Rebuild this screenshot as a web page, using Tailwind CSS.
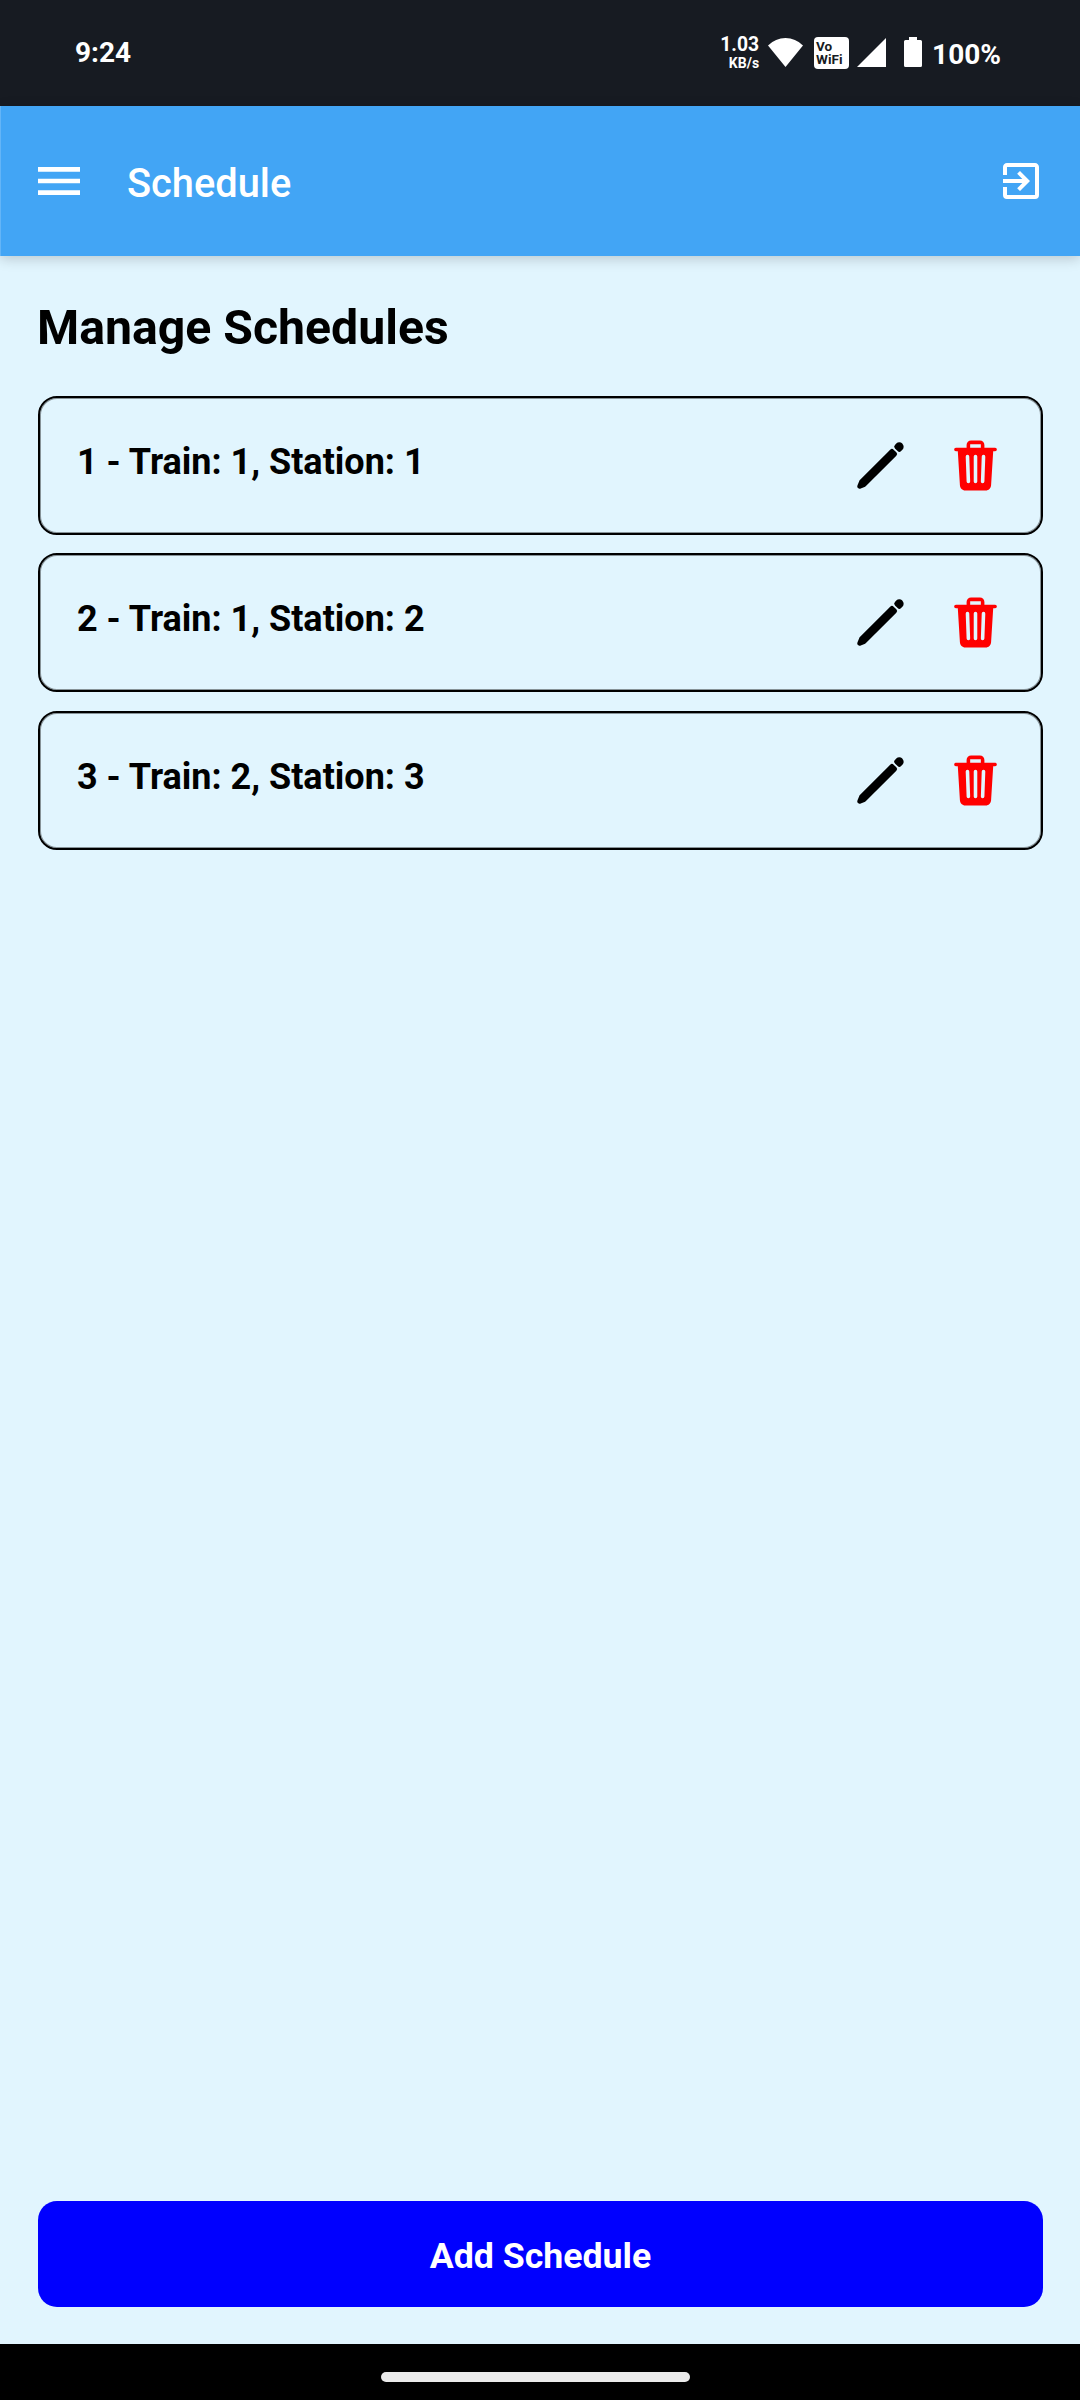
<!DOCTYPE html>
<html lang="en">
<head>
<meta charset="utf-8">
<title>Schedule</title>
<script src="https://cdn.jsdelivr.net/npm/@tailwindcss/browser@4"></script>
</head>
<body class="w-[1080px] h-[2400px] flex flex-col overflow-hidden bg-[#e1f5fe] font-['Roboto',sans-serif] text-black">
  <svg class="hidden">
    <symbol id="pencil" viewBox="0 0 512 512">
      <g fill="currentColor" stroke="currentColor" stroke-width="44" stroke-linecap="round" stroke-linejoin="round">
        <path d="M358.62 129.28L86.49 402.08 70 442l39.92-16.49 272.8-272.13-24.1-24.1z"/>
        <path d="M413.07 74.84l-11.79 11.78 24.1 24.1 11.79-11.79a16.51 16.51 0 000-23.35l-.75-.74a16.51 16.51 0 00-23.35 0z"/>
      </g>
    </symbol>
    <symbol id="trash" viewBox="0 0 512 512">
      <path fill="currentColor" d="M432 96h-96V72a40 40 0 00-40-40h-80a40 40 0 00-40 40v24H80a16 16 0 000 32h17l19 304.92c1.42 26.85 22 47.08 48 47.08h184c26.13 0 46.3-19.78 48-47l19-305h17a16 16 0 000-32zM192.57 416H192a16 16 0 01-16-15.43l-8-224a16 16 0 1132-1.14l8 224A16 16 0 01192.57 416zM272 400a16 16 0 01-32 0V176a16 16 0 0132 0zm32-304h-96V72a7.91 7.91 0 018-8h80a7.91 7.91 0 018 8zm32 304.57A16 16 0 01320 416h-.58A16 16 0 01304 399.43l8-224a16 16 0 1132 1.14z"/>
    </symbol>
  </svg>

  <!-- Status bar -->
  <div class="h-[106px] shrink-0 flex items-start bg-[#171b22] text-white font-bold pl-[75px] pr-[79px]">
    <span class="mt-[39px] text-[28px] leading-none">9:24</span>
    <div class="ml-auto mt-[35px] flex flex-col items-end">
      <span class="text-[19.3px] leading-[19px]">1.03</span>
      <span class="mt-[2px] text-[14px] leading-[14px]">KB/s</span>
    </div>
    <svg class="mt-[38px] ml-[9px] w-[35px] h-[29px]" viewBox="0 0 35 29"><path fill="#fff" d="M0 7.500Q7.500 0 17.500 0T35 7.500L17.500 29z"/></svg>
    <div class="mt-[37px] ml-[11px] w-[35px] h-[32px] rounded-[4px] bg-white text-[#171b22] pl-[2px] pt-[3px] text-[13.5px] leading-[13px]">
      <div>Vo</div><div>WiFi</div>
    </div>
    <svg class="mt-[38px] ml-[8px] w-[29px] h-[29px]" viewBox="0 0 29 29"><path fill="#fff" d="M29 0v29H0z"/></svg>
    <svg class="mt-[37px] ml-[18px] w-[18px] h-[30px]" viewBox="0 0 18 30"><path fill="#fff" d="M5 0h8v3h3.500q1.500 0 1.500 1.500v24q0 1.500-1.500 1.500h-15Q0 30 0 28.500v-24Q0 3 1.500 3H5z"/></svg>
    <span class="mt-[41px] ml-[10px] text-[28px] leading-none">100%</span>
  </div>

  <!-- App bar -->
  <header class="relative h-[150px] shrink-0 flex items-start bg-[#42a5f5] text-white border-l border-[#64b5f7] shadow-[0_3px_12px_rgba(0,0,0,0.18)] pl-[30px] pr-[35px]">
    <svg class="mt-[47px] w-[56px] h-[56px]" viewBox="0 0 24 24"><path fill="currentColor" d="M3 18h18v-2H3v2zm0-5h18v-2H3v2zm0-7v2h18V6H3z"/></svg>
    <h1 class="ml-[40px] mt-[58px] text-[39.8px] leading-none font-medium">Schedule</h1>
    <svg class="ml-auto mt-[51px] w-[48px] h-[48px]" viewBox="0 0 24 24"><path fill="currentColor" d="M19 3H5C3.890 3 3 3.890 3 5V9H5V5H19V19H5V15H3V19A2 2 0 0 0 5 21H19A2 2 0 0 0 21 19V5C21 3.890 20.100 3 19 3M10.080 15.580L11.500 17L16.500 12L11.500 7L10.080 8.410L12.670 11H3V13H12.670L10.080 15.580Z"/></svg>
  </header>

  <main class="grow flex flex-col pt-[48px] pl-[38px] pr-[37px] pb-[37px]">
    <h2 class="-ml-px text-[48.2px] leading-[48px] font-bold">Manage Schedules</h2>
    <ul class="mt-[44px] flex flex-col gap-[18.4px]">
      <li class="h-[139px] flex items-start border-2 border-black rounded-[19px] shadow-[inset_0_0_0_1px_rgba(0,0,0,0.4)] pl-[37px] pr-[37px]">
        <span class="mt-[46px] text-[36px] leading-none font-bold">1 - Train: 1, Station: 1</span>
        <svg class="ml-auto mt-[39px] w-[57px] h-[57px]"><use href="#pencil"/></svg>
        <svg class="ml-[38px] mt-[39px] w-[57px] h-[57px] text-[#ff0000]"><use href="#trash"/></svg>
      </li>
      <li class="h-[139px] flex items-start border-2 border-black rounded-[19px] shadow-[inset_0_0_0_1px_rgba(0,0,0,0.4)] pl-[37px] pr-[37px]">
        <span class="mt-[46px] text-[36px] leading-none font-bold">2 - Train: 1, Station: 2</span>
        <svg class="ml-auto mt-[39px] w-[57px] h-[57px]"><use href="#pencil"/></svg>
        <svg class="ml-[38px] mt-[39px] w-[57px] h-[57px] text-[#ff0000]"><use href="#trash"/></svg>
      </li>
      <li class="h-[139px] flex items-start border-2 border-black rounded-[19px] shadow-[inset_0_0_0_1px_rgba(0,0,0,0.4)] pl-[37px] pr-[37px]">
        <span class="mt-[46px] text-[36px] leading-none font-bold">3 - Train: 2, Station: 3</span>
        <svg class="ml-auto mt-[39px] w-[57px] h-[57px]"><use href="#pencil"/></svg>
        <svg class="ml-[38px] mt-[39px] w-[57px] h-[57px] text-[#ff0000]"><use href="#trash"/></svg>
      </li>
    </ul>
    <button class="mt-auto h-[106px] pt-[5px] rounded-[19px] bg-[#0000ff] text-white text-[35.7px] leading-none font-bold">Add Schedule</button>
  </main>

  <!-- Gesture bar -->
  <div class="h-[56px] shrink-0 bg-black flex pl-[381px] pt-[28px]">
    <div class="w-[309px] h-[10px] rounded-full bg-[#ebebeb]"></div>
  </div>
</body>
</html>
